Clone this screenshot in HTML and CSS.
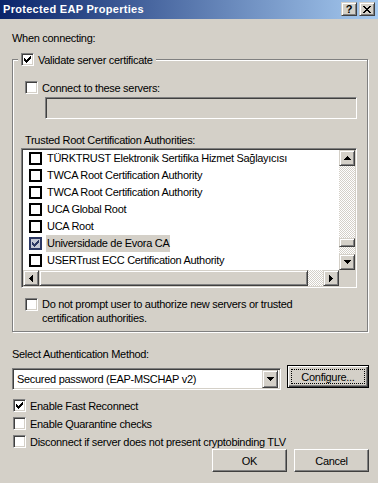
FILE: index.html
```html
<!DOCTYPE html>
<html>
<head>
<meta charset="utf-8">
<link rel="stylesheet" href="styles.css">
</head>
<body>
<div class="titlebar">
  <span class="title">Protected EAP Properties</span>
  <div class="tbtns">
    <span class="tbtn help">?</span>
    <span class="tbtn close"><svg width="8" height="7" viewBox="0 0 8 7"><path d="M0 0h2v1H0zM6 0h2v1H6zM1 1h2v1H1zM5 1h2v1H5zM2 2h4v1H2zM3 3h2v1H3zM2 4h4v1H2zM1 5h2v1H1zM5 5h2v1H5zM0 6h2v1H0zM6 6h2v1H6z"/></svg></span>
  </div>
</div>
<div class="main">
  <div class="lbl when">When connecting:</div>
  <div class="group">
    <div class="legend">
      <span class="cb"><svg width="11" height="11" viewBox="1 1 11 11"><path d="M9 3h1v1H9zM8 4h2v1H8zM3 5h1v1H3zM7 5h3v1H7zM3 6h2v1H3zM6 6h3v1H6zM3 7h5v1H3zM4 8h3v1H4zM5 9h1v1H5z"/></svg></span>
      <span>Validate server certificate</span>
    </div>
    <div class="row connect"><span class="cb"></span><span>Connect to these servers:</span></div>
    <div class="field disabled"></div>
    <div class="lbl trusted">Trusted Root Certification Authorities:</div>
    <div class="list">
      <div class="list-main">
        <div class="items">
          <div class="item"><span class="lcb"></span><span class="itext">TÜRKTRUST Elektronik Sertifika Hizmet Sağlayıcısı</span></div>
          <div class="item"><span class="lcb"></span><span class="itext">TWCA Root Certification Authority</span></div>
          <div class="item"><span class="lcb"></span><span class="itext">TWCA Root Certification Authority</span></div>
          <div class="item"><span class="lcb"></span><span class="itext">UCA Global Root</span></div>
          <div class="item"><span class="lcb"></span><span class="itext">UCA Root</span></div>
          <div class="item"><span class="lcb on"><svg width="9" height="9" viewBox="2 2 9 9"><path d="M9 3h1v1H9zM8 4h2v1H8zM3 5h1v1H3zM7 5h3v1H7zM3 6h2v1H3zM6 6h3v1H6zM3 7h5v1H3zM4 8h3v1H4zM5 9h1v1H5z"/></svg></span><span class="itext sel">Universidade de Evora CA</span></div>
          <div class="item"><span class="lcb"></span><span class="itext">USERTrust ECC Certification Authority</span></div>
        </div>
        <div class="vscroll">
          <span class="sbtn"><svg width="7" height="4" viewBox="0 0 7 4"><path d="M3 0h1v1H3zM2 1h3v1H2zM1 2h5v1H1zM0 3h7v1H0z"/></svg></span>
          <div class="vtrack"><span class="vthumb"></span></div>
          <span class="sbtn"><svg width="7" height="4" viewBox="0 0 7 4"><path d="M0 0h7v1H0zM1 1h5v1H1zM2 2h3v1H2zM3 3h1v1H3z"/></svg></span>
        </div>
      </div>
      <div class="hrow">
        <div class="hscroll">
          <span class="sbtn"><svg width="4" height="7" viewBox="0 0 4 7"><path d="M3 0h1v7H3zM2 1h1v5H2zM1 2h1v3H1zM0 3h1v1H0z"/></svg></span>
          <div class="htrack"><span class="hthumb"></span></div>
          <span class="sbtn"><svg width="4" height="7" viewBox="0 0 4 7"><path d="M0 0h1v7H0zM1 1h1v5H1zM2 2h1v3H2zM3 3h1v1H3z"/></svg></span>
        </div>
        <div class="corner"></div>
      </div>
    </div>
    <div class="row prompt"><span class="cb"></span><span class="ptext">Do not prompt user to authorize new servers or trusted certification authorities.</span></div>
  </div>
  <div class="lbl select">Select Authentication Method:</div>
  <div class="method-row">
    <div class="combo">
      <span class="ctext">Secured password (EAP-MSCHAP v2)</span>
      <span class="sbtn cbtn"><svg width="7" height="4" viewBox="0 0 7 4"><path d="M0 0h7v1H0zM1 1h5v1H1zM2 2h3v1H2zM3 3h1v1H3z"/></svg></span>
    </div>
    <div class="btn default"><span class="focus">Configure...</span></div>
  </div>
  <div class="checks">
    <div class="row"><span class="cb"><svg width="11" height="11" viewBox="1 1 11 11"><path d="M9 3h1v1H9zM8 4h2v1H8zM3 5h1v1H3zM7 5h3v1H7zM3 6h2v1H3zM6 6h3v1H6zM3 7h5v1H3zM4 8h3v1H4zM5 9h1v1H5z"/></svg></span><span>Enable Fast Reconnect</span></div>
    <div class="row"><span class="cb"></span><span>Enable Quarantine checks</span></div>
    <div class="row"><span class="cb"></span><span>Disconnect if server does not present cryptobinding TLV</span></div>
  </div>
  <div class="buttons">
    <div class="btn">OK</div>
    <div class="btn">Cancel</div>
  </div>
</div>
</body>
</html>
```
FILE: styles.css
```css
* { box-sizing: border-box; }
body {
  margin: 0;
  width: 378px;
  height: 483px;
  overflow: hidden;
  background: #d4d0c8;
  font: 11px "Liberation Sans", Arial, sans-serif;
  letter-spacing: -0.3px;
  color: #000;
}
svg { display: block; shape-rendering: crispEdges; }

.titlebar {
  height: 19px;
  display: flex;
  align-items: center;
  justify-content: space-between;
  padding: 0 3px 1px 3px;
  background: linear-gradient(to right, #0a246a, #a6caf0);
  color: #fff;
  font-weight: bold;
  letter-spacing: 0.3px;
}
.tbtns { display: flex; gap: 2px; }
.tbtn {
  width: 16px;
  height: 14px;
  background: #d4d0c8;
  border: 1px solid;
  border-color: #d4d0c8 #404040 #404040 #d4d0c8;
  box-shadow: inset 1px 1px #fff, inset -1px -1px #808080;
  display: flex;
  align-items: center;
  justify-content: center;
  color: #000;
  font-weight: bold;
  font-size: 11px;
  line-height: 12px;
  letter-spacing: 0;
}

.main { padding-left: 12px; }
.lbl { line-height: 13px; height: 13px; white-space: nowrap; }
.when { margin-top: 13px; }

.group {
  position: relative;
  margin-top: 14px;
  width: 356px;
  border: 1px solid #808080;
  box-shadow: 1px 1px 0 #fff, inset 1px 1px 0 #fff;
  padding-bottom: 6px;
}
.legend {
  position: absolute;
  left: 5px;
  top: -7px;
  height: 13px;
  display: flex;
  align-items: center;
  gap: 4px;
  padding: 0 3px 0 3px;
  background: #d4d0c8;
  white-space: nowrap;
}

.cb {
  width: 13px;
  height: 13px;
  flex: none;
  background: #fff;
  border: 1px solid;
  border-color: #808080 #fff #fff #808080;
  box-shadow: inset 1px 1px #404040, inset -1px -1px #d4d0c8;
}
.row { display: flex; align-items: center; gap: 4px; height: 13px; white-space: nowrap; }
.connect { margin: 21px 0 0 12px; }

.field {
  margin: 3px 0 0 32px;
  width: 312px;
  height: 22px;
  border: 1px solid;
  border-color: #808080 #fff #fff #808080;
  box-shadow: inset 1px 1px #404040, inset -1px -1px #d4d0c8;
  background: #d4d0c8;
}
.trusted { margin: 15px 0 0 12px; }

.list {
  margin: 1px 0 0 8px;
  width: 336px;
  height: 140px;
  border: 1px solid;
  border-color: #808080 #fff #fff #808080;
  box-shadow: inset 1px 1px #404040, inset -1px -1px #d4d0c8;
  background: #fff;
  padding: 1px;
}
.list-main { display: flex; height: 120px; }
.items { flex: 1; overflow: hidden; }
.item {
  height: 17px;
  display: flex;
  align-items: center;
  padding-left: 6px;
  white-space: nowrap;
}
.lcb {
  width: 13px;
  height: 13px;
  flex: none;
  border: 2px solid #000;
  background: #fff;
}
.lcb.on { border-color: #2b3763; background: #c3c7d4; fill: #2b3763; }
.itext { margin-left: 4px; padding: 0 1px; line-height: 17px; height: 17px; }
.itext.sel { background: #d4d0c8; }

.sbtn {
  width: 16px;
  height: 16px;
  flex: none;
  background: #d4d0c8;
  border: 1px solid;
  border-color: #d4d0c8 #404040 #404040 #d4d0c8;
  box-shadow: inset 1px 1px #fff, inset -1px -1px #808080;
  display: flex;
  align-items: center;
  justify-content: center;
}
.vscroll { width: 16px; display: flex; flex-direction: column; }
.vtrack, .htrack {
  flex: 1;
  display: flex;
  background-color: #fff;
  background-image: conic-gradient(#d4d0c8 25%, #fff 0 50%, #d4d0c8 0 75%, #fff 0);
  background-size: 2px 2px;
}
.vtrack { flex-direction: column; }
.vthumb, .hthumb {
  background: #d4d0c8;
  border: 1px solid;
  border-color: #d4d0c8 #404040 #404040 #d4d0c8;
  box-shadow: inset 1px 1px #fff, inset -1px -1px #808080;
}
.vthumb { margin-top: 72px; height: 9px; width: 16px; }
.hrow { display: flex; height: 16px; }
.hscroll { flex: 1; display: flex; }
.hthumb { width: 269px; height: 16px; }
.corner { width: 16px; background: #d4d0c8; }

.prompt {
  margin: 9px 0 0 12px;
  align-items: flex-start;
  height: 28px;
  white-space: normal;
}
.prompt .cb { margin-top: 1px; }
.ptext { width: 275px; line-height: 14px; }

.select { margin-top: 16px; }
.method-row { margin-top: 4px; display: flex; align-items: flex-start; }
.combo {
  margin-top: 3px;
  width: 269px;
  height: 22px;
  display: flex;
  align-items: center;
  justify-content: space-between;
  padding: 2px;
  border: 1px solid;
  border-color: #808080 #fff #fff #808080;
  box-shadow: inset 1px 1px #404040, inset -1px -1px #d4d0c8;
  background: #fff;
}
.ctext { padding-left: 2px; white-space: nowrap; }
.cbtn { height: 18px; }

.btn {
  width: 75px;
  height: 23px;
  display: flex;
  align-items: center;
  justify-content: center;
  background: #d4d0c8;
  border: 1px solid;
  border-color: #fff #404040 #404040 #fff;
  box-shadow: inset -1px -1px #808080;
}
.btn.default {
  margin-left: 6px;
  width: 82px;
  border: 1px solid #000;
  box-shadow: inset 1px 1px #fff, inset -1px -1px #404040, inset -2px -2px #808080;
  padding: 3px;
}
.focus {
  flex: 1;
  align-self: stretch;
  display: flex;
  align-items: center;
  justify-content: center;
  border: 1px dotted #000;
}

.checks { margin-top: 9px; display: flex; flex-direction: column; gap: 5px; padding-left: 1px; }
.buttons {
  margin-top: 1px;
  width: 357px;
  display: flex;
  justify-content: flex-end;
  gap: 7px;
}
```
